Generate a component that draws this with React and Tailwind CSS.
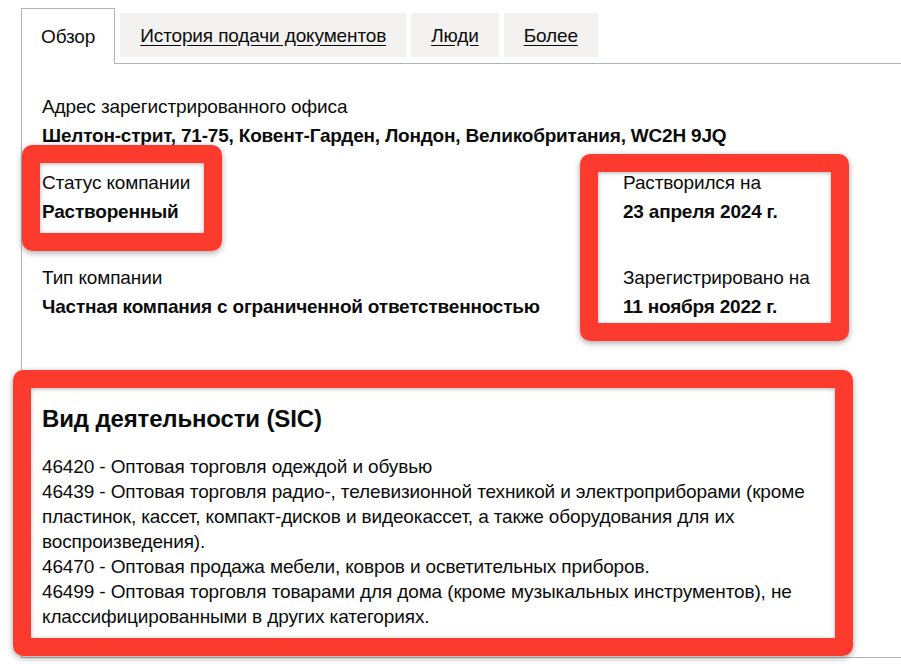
import React from 'react';

const font = { fontFamily: '"Liberation Sans", Arial, sans-serif' };

function Field({ label, value, className = '' }) {
  return (
    <div className={className}>
      <div className="text-[19px] leading-[25px] text-[#0b0c0c]">{label}</div>
      <div className="mt-1 text-[19px] leading-[25px] font-bold tracking-[-0.2px] text-[#0b0c0c]">{value}</div>
    </div>
  );
}

function Highlight({ className }) {
  return (
    <div
      className={`pointer-events-none absolute rounded-[10px] border-[18px] border-[#fd3a2e] shadow-[0_2px_6px_rgba(0,0,0,0.35),inset_0_1px_4px_rgba(0,0,0,0.3)] ${className}`}
    />
  );
}

const tabs = ['История подачи документов', 'Люди', 'Более'];

const sic = [
  ['46420', 'Оптовая торговля одеждой и обувью'],
  ['46439', 'Оптовая торговля радио-, телевизионной техникой и электроприборами (кроме', 'пластинок, кассет, компакт-дисков и видеокассет, а также оборудования для их', 'воспроизведения).'],
  ['46470', 'Оптовая продажа мебели, ковров и осветительных приборов.'],
  ['46499', 'Оптовая торговля товарами для дома (кроме музыкальных инструментов), не', 'классифицированными в других категориях.'],
];

export default function App() {
  return (
    <div className="relative w-[901px] h-[669px] overflow-hidden bg-white text-[#0b0c0c] tracking-[-0.13px]" style={font}>
      <div className="pl-[21px] pt-[8px] w-[960px]">
        {/* tabs */}
        <div className="flex items-start gap-[5px]">
          <div className="relative z-10 -mb-px h-[56px] border border-b-0 border-[#b1b4b6] bg-white px-[19px] pt-[15px] text-[19px] leading-[25px]">
            Обзор
          </div>
          {tabs.map((t) => (
            <div key={t} className="mt-[5px] h-[44px] bg-[#f3f2f1] px-[20px] pt-[10px] text-[19px] leading-[25px] underline underline-offset-[3px]">
              {t}
            </div>
          ))}
        </div>

        {/* panel */}
        <div className="border border-r-0 border-[#b1b4b6] pl-[20px] pt-[30px] pb-[28px]">
          <Field label="Адрес зарегистрированного офиса" value="Шелтон-стрит, 71-75, Ковент-Гарден, Лондон, Великобритания, WC2H 9JQ" />

          <div className="mt-[22px] grid grid-cols-[581px_1fr] gap-y-[41px]">
            <Field label="Статус компании" value="Растворенный" />
            <Field label="Растворился на" value="23 апреля 2024 г." />
            <Field label="Тип компании" value="Частная компания с ограниченной ответственностью" />
            <Field label="Зарегистрировано на" value="11 ноября 2022 г." />
          </div>

          <h2 className="mt-[85px] text-[24px] leading-[30px] font-bold tracking-[-0.15px]">Вид деятельности (SIC)</h2>
          <ul className="mt-[20px] text-[19px] leading-[25px]">
            {sic.map(([code, ...lines]) => (
              <li key={code} className="whitespace-nowrap">
                {code} - {lines.map((l, i) => (
                  <React.Fragment key={i}>
                    {i > 0 && <br />}
                    {l}
                  </React.Fragment>
                ))}
              </li>
            ))}
          </ul>
        </div>
      </div>

      {/* annotation highlights */}
      <Highlight className="left-[22px] top-[145px] w-[200px] h-[106px]" />
      <Highlight className="left-[580px] top-[154px] w-[269px] h-[187px]" />
      <Highlight className="left-[13px] top-[370px] w-[840px] h-[286px]" />
    </div>
  );
}
